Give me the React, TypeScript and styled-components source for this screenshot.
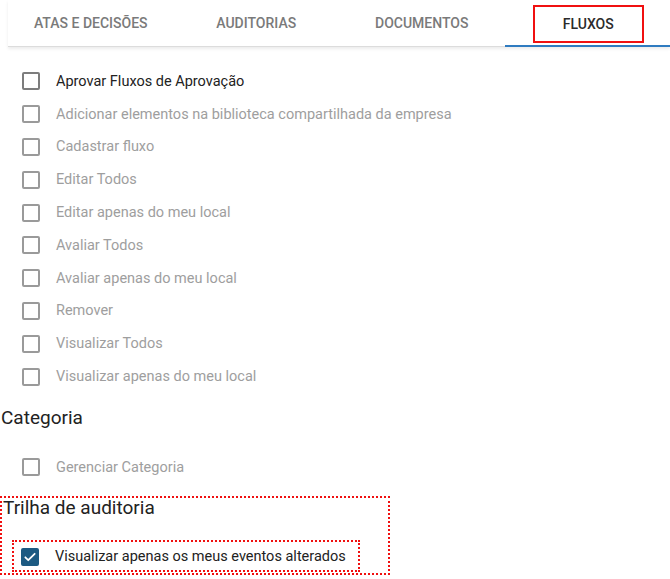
import React from "react";
import styled, { createGlobalStyle } from "styled-components";

const Global = createGlobalStyle`
  html, body { margin: 0; padding: 0; background: #fff; }
  body { font-family: Roboto, "Noto Sans", Arial, sans-serif; color: #212121; }
  * { box-sizing: border-box; }
`;

const TabBar = styled.div`
  display: flex;
  margin-left: 8px;
  height: 47px;
  border-bottom: 1px solid #dcdcdc;
  box-shadow: 0 2px 3px rgba(0, 0, 0, 0.08);
`;

const Tab = styled.div<{ $active?: boolean }>`
  flex: 1;
  display: flex;
  align-items: center;
  justify-content: center;
  font-size: 14px;
  font-weight: 500;
  text-transform: uppercase;
  color: ${(p) => (p.$active ? "#2b2b2b" : "#7a7a7a")};
  border-bottom: 2px solid ${(p) => (p.$active ? "#2f7bc0" : "transparent")};
  margin-bottom: -1px;
`;

const Highlight = styled.span`
  display: flex;
  align-items: center;
  justify-content: center;
  width: 111px;
  height: 38px;
  margin-top: 2px;
  margin-left: 2px;
  border: 2px solid #f01010;
`;

const List = styled.div`
  padding-top: 18px;
  display: flex;
  flex-direction: column;
`;

const Row = styled.label<{ $disabled?: boolean }>`
  display: flex;
  align-items: center;
  height: 32.8px;
  padding-left: 22px;
  gap: 16px;
  font-size: 14.5px;
  color: ${(p) => (p.$disabled ? "#9e9e9e" : "#222")};
`;

const Box = styled.span<{ $checked?: boolean; $dark?: boolean }>`
  width: 18px;
  height: 18px;
  border-radius: 2px;
  border: 2px solid
    ${(p) => (p.$checked ? "#1c5a82" : p.$dark ? "#7d7d7d" : "#9a9a9a")};
  background: ${(p) => (p.$checked ? "#1c5a82" : "transparent")};
  display: flex;
  align-items: center;
  justify-content: center;
  flex-shrink: 0;
`;

const Heading = styled.div`
  font-size: 19px;
  color: #222;
  padding-left: 1px;
  line-height: 24px;
`;

const CategoryHeading = styled(Heading)`
  margin-top: 13px;
  margin-bottom: 21px;
`;

const Annotated = styled.div`
  margin-top: 12px;
  width: 390px;
  border: 2px dotted #f01010;
  padding-bottom: 1px;
`;

const AuditHeading = styled(Heading)`
  margin-top: -2px;
  margin-bottom: 20px;
`;

const InnerBox = styled.div`
  margin-left: 10px;
  width: 348px;
  height: 32px;
  border: 2px dotted #f01010;
  display: flex;
  align-items: center;
  & > label {
    padding-left: 7px;
    height: 28px;
    padding-top: 2px;
  }
`;

type Item = { label: string; disabled?: boolean; checked?: boolean };

const CheckRow: React.FC<Item> = ({ label, disabled, checked }) => (
  <Row $disabled={disabled}>
    <Box $checked={checked} $dark={!disabled}>
      {checked && (
        <svg width="14" height="14" viewBox="0 0 24 24" fill="none">
          <path
            d="M4 12.5l5 5L20 6.5"
            stroke="#fff"
            strokeWidth="3"
            strokeLinecap="round"
            strokeLinejoin="round"
          />
        </svg>
      )}
    </Box>
    <span>{label}</span>
  </Row>
);

const flows: Item[] = [
  { label: "Aprovar Fluxos de Aprovação" },
  { label: "Adicionar elementos na biblioteca compartilhada da empresa", disabled: true },
  { label: "Cadastrar fluxo", disabled: true },
  { label: "Editar Todos", disabled: true },
  { label: "Editar apenas do meu local", disabled: true },
  { label: "Avaliar Todos", disabled: true },
  { label: "Avaliar apenas do meu local", disabled: true },
  { label: "Remover", disabled: true },
  { label: "Visualizar Todos", disabled: true },
  { label: "Visualizar apenas do meu local", disabled: true },
];

const tabs = ["Atas e decisões", "Auditorias", "Documentos", "Fluxos"];

export default function App() {
  return (
    <>
      <Global />
      <TabBar>
        {tabs.map((t, i) =>
          i === 3 ? (
            <Tab key={t} $active>
              <Highlight>{t}</Highlight>
            </Tab>
          ) : (
            <Tab key={t}>{t}</Tab>
          )
        )}
      </TabBar>
      <List>
        {flows.map((f) => (
          <CheckRow key={f.label} {...f} />
        ))}
        <CategoryHeading>Categoria</CategoryHeading>
        <CheckRow label="Gerenciar Categoria" disabled />
        <Annotated>
          <AuditHeading>Trilha de auditoria</AuditHeading>
          <InnerBox>
            <CheckRow label="Visualizar apenas os meus eventos alterados" checked />
          </InnerBox>
        </Annotated>
      </List>
    </>
  );
}
